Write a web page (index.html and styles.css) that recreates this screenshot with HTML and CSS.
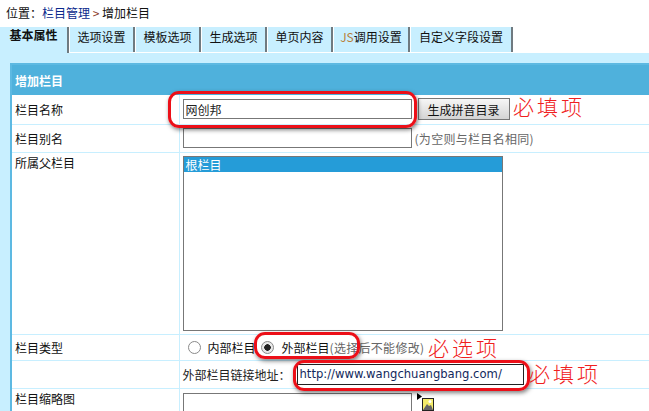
FILE: index.html
```html
<!DOCTYPE html>
<html lang="zh">
<head>
  <meta charset="UTF-8">
  <title>增加栏目</title>
  <link rel="stylesheet" href="styles.css">
</head>
<body>
  <div class="crumb">位置：<a class="crumb-link">栏目管理</a> <span class="crumb-sep">&gt;</span> 增加栏目</div>

  <div class="tabs">
    <div class="tab tab-active">基本属性</div>
    <div class="tab">选项设置</div>
    <div class="tab">模板选项</div>
    <div class="tab">生成选项</div>
    <div class="tab">单页内容</div>
    <div class="tab tab-js"><span class="js">JS</span>调用设置</div>
    <div class="tab tab-custom">自定义字段设置</div>
  </div>

  <div class="panel">
    <table class="form">
      <colgroup>
        <col class="col-label">
        <col>
      </colgroup>
      <tr class="head"><th colspan="2">增加栏目</th></tr>
      <tr class="row-name">
        <td class="label">栏目名称</td>
        <td class="field">
          <span class="inline">
            <input class="text" type="text" value="网创邦">
            <button class="pinyin">生成拼音目录</button>
          </span>
        </td>
      </tr>
      <tr class="row-alias">
        <td class="label">栏目别名</td>
        <td class="field">
          <span class="inline">
            <input class="text" type="text">
            <span class="hint">(为空则与栏目名相同)</span>
          </span>
        </td>
      </tr>
      <tr class="row-parent">
        <td class="label label-top">所属父栏目</td>
        <td class="field field-top">
          <div class="listbox"><div class="option">根栏目</div></div>
        </td>
      </tr>
      <tr class="row-type">
        <td class="label">栏目类型</td>
        <td class="field">
          <span class="radios">
            <span class="radio"></span><span class="radio-text">内部栏目</span>
            <span class="radio radio-on"></span><span class="radio-text">外部栏目</span><span class="hint hint-tight">(选择后不能修改)</span>
          </span>
        </td>
      </tr>
      <tr class="row-url">
        <td class="label"></td>
        <td class="field">
          <span class="inline">
            <span class="url-label">外部栏目链接地址：</span>
            <input class="text url" type="text" value="http://www.wangchuangbang.com/">
          </span>
        </td>
      </tr>
      <tr class="row-thumb">
        <td class="label label-top">栏目缩略图</td>
        <td class="field field-top">
          <span class="inline inline-top">
            <input class="text text-cut" type="text">
            <svg class="pic" width="17" height="18" viewBox="0 0 17 18">
              <path d="M0 0v7l5-3.500z" fill="#000"/>
              <rect x="5.500" y="5.500" width="11" height="12" fill="#f4ec6a" stroke="#222"/>
              <path d="M6 17l4-6 2 2 2-1 2 5z" fill="#666"/>
              <circle cx="13" cy="8.500" r="1.500" fill="#fff"/>
            </svg>
          </span>
        </td>
      </tr>
    </table>
  </div>

  <!-- 红框标注 -->
  <div class="mark mark-name"></div>
  <div class="mark mark-radio"></div>
  <div class="mark mark-url"></div>
  <div class="note note-name">必填项</div>
  <div class="note note-radio">必选项</div>
  <div class="note note-url">必填项</div>
</body>
</html>
```

FILE: styles.css
```css
* {
  box-sizing: border-box;
}

html, body {
  height: 100%;
}

body {
  margin: 0;
  position: relative;
  overflow: hidden;
  background: #c8efff;
  color: #111;
  font-family: "Noto Sans CJK SC", "Liberation Sans", sans-serif;
  font-size: 12px;
}

.crumb {
  height: 27px;
  padding: 5px 0 0 6px;
  background: #fff;
  line-height: 16px;
}

.crumb-link {
  color: #0b2a8c;
}

.crumb-sep {
  color: #8a3a2a;
}

.tabs {
  display: flex;
  height: 26px;
  background: #fff;
  border-bottom: 1px solid #fff;
}

.tab {
  width: 65px;
  margin-right: 1px;
  background: #c8efff;
  border-right: 2px solid #6f7a80;
  text-align: center;
  line-height: 20px;
}

.tab-active {
  width: 69px;
  font-weight: 700;
  line-height: 15px;
  height: 26px;
}

.tab-js {
  width: 76px;
}

.tab-custom {
  width: 102px;
  margin-right: 0;
}

.js {
  color: #b9803a;
}

.panel {
  padding: 10px 0 0 10px;
}

.form {
  width: 100%;
  border-collapse: collapse;
  table-layout: fixed;
  background: #fff;
  border-top: 2px solid #5db9e2;
  border-left: 2px solid #5db9e2;
}

.col-label {
  width: 168px;
}

.head th {
  height: 31px;
  padding: 0 0 0 3px;
  background: #4fb1dc;
  color: #fff;
  font-size: 12px;
  font-weight: 700;
  text-align: left;
}

td {
  padding: 0;
  border-bottom: 1px solid #c8efff;
}

.label {
  padding-left: 3px;
  border-right: 1px solid #c8efff;
}

.label-top {
  padding-top: 1px;
  vertical-align: top;
}

.field {
  padding-left: 3px;
}

.field-top {
  vertical-align: top;
}

.row-name td {
  height: 29px;
}

.row-alias td {
  height: 28px;
}

.row-parent td {
  height: 182px;
}

.row-type td {
  height: 26px;
}

.row-url td {
  height: 28px;
}

.row-thumb td {
  height: 22px;
  border-bottom: 0;
}

.row-thumb .field {
  padding-top: 4px;
}

.inline {
  display: flex;
  align-items: center;
}

.inline-top {
  align-items: flex-start;
}

.text {
  width: 229px;
  height: 20px;
  margin: 0;
  padding: 0 2px;
  border: 1px solid #777;
  background: #fff;
  color: #222;
  font-family: inherit;
  font-size: 12px;
}

.text-cut {
  height: 18px;
  border-bottom: 0;
}

.pinyin {
  width: 92px;
  height: 22px;
  margin: 0 0 0 6px;
  padding: 0;
  border: 1px solid #777;
  background: linear-gradient(#f6f6f6, #d4d4d4);
  color: #111;
  font-family: inherit;
  font-size: 12px;
}

.hint {
  margin-left: 3px;
  color: #666;
  letter-spacing: 0.3px;
  white-space: nowrap;
}

.hint-tight {
  margin-left: 0;
}

.listbox {
  width: 320px;
  height: 175px;
  margin-top: 3px;
  border: 1px solid #777;
  background: #fff;
}

.option {
  height: 15px;
  padding-left: 2px;
  background: #259cd8;
  color: #fff;
  line-height: 15px;
}

.radios {
  display: flex;
  align-items: center;
  padding-left: 5px;
}

.radio {
  width: 13px;
  height: 13px;
  border: 1px solid #8a8a8a;
  border-radius: 50%;
  background: #fff;
}

.radio-on {
  margin-left: 5px;
  background: radial-gradient(circle, #222 0 3px, #e8e8e8 3.500px);
}

.radio-text {
  margin-left: 7px;
}

.radio-on + .radio-text {
  margin-left: 8px;
}

.url-label {
  width: 114px;
  color: #222;
  white-space: nowrap;
}

.url {
  width: 227px;
  height: 21px;
  border-color: #222;
  color: #12285c;
  font-family: "DejaVu Sans", sans-serif;
  font-size: 11.6px;
}

.pic {
  margin-left: 5px;
}

.mark {
  position: absolute;
  border: 3px solid #ec0f18;
  border-radius: 11px;
  box-shadow: 1px 2px 4px rgba(0, 0, 0, 0.5);
}

.mark-name {
  left: 168px;
  top: 91px;
  width: 249px;
  height: 37px;
}

.mark-radio {
  left: 254px;
  top: 332px;
  width: 106px;
  height: 27px;
}

.mark-url {
  left: 293px;
  top: 360px;
  width: 237px;
  height: 31px;
}

.note {
  position: absolute;
  color: #f02020;
  font-size: 21px;
  font-weight: 300;
  letter-spacing: 3px;
  line-height: 24px;
}

.note-name {
  left: 513px;
  top: 94px;
}

.note-radio {
  left: 428px;
  top: 335px;
}

.note-url {
  left: 529px;
  top: 361px;
}
```
